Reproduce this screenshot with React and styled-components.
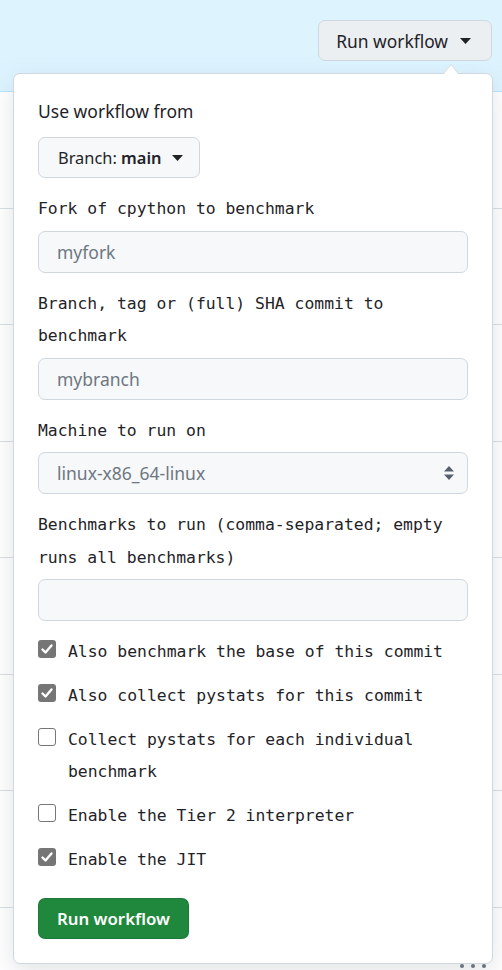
import React from 'react'
import styled, { createGlobalStyle } from 'styled-components'

const GlobalStyle = createGlobalStyle`
  html, body { margin: 0; padding: 0; background: #fff; }
  body { font-family: "Noto Sans", "Open Sans", sans-serif; color: #1f2328; overflow: hidden; }
  * { box-sizing: border-box; }
`

const Page = styled.div`
  position: relative;
  width: 502px;
  height: 970px;
  overflow: hidden;
`

const Header = styled.div`
  height: 92px;
  background: #ddf4ff;
  border-bottom: 1px solid #b6e3ff;
  display: flex;
  justify-content: flex-end;
  align-items: flex-start;
  padding: 20px 10px 0 0;
`

const TopButton = styled.button`
  display: flex;
  align-items: center;
  gap: 12px;
  height: 41px;
  padding: 0 20px 0 17px;
  border: 1px solid #d0d7de;
  border-radius: 7px;
  background: #ebeff2;
  color: #1f2328;
  font-family: inherit;
  font-size: 17.4px;
`

const Row = styled.div`
  height: 116.5px;
  border-bottom: ${p => (p.$last ? 'none' : '1px solid #d8dee4')};
  display: flex;
  justify-content: flex-end;
  align-items: flex-start;
  padding: ${p => (p.$last ? '56px 16px 0 0' : '0')};
`

const Kebab = styled.div`
  display: flex;
  gap: 7px;
  span { width: 4px; height: 4px; border-radius: 50%; background: #656d76; }
`

const Panel = styled.div`
  position: absolute;
  top: 73px;
  left: 13px;
  width: 480px;
  background: #fff;
  border: 1px solid #d0d7de;
  border-radius: 7px;
  box-shadow: 0 8px 24px rgba(140, 149, 159, 0.25);
  padding: 24px 24px 24px 24px;
  display: flex;
  flex-direction: column;
  &::before, &::after {
    content: '';
    position: absolute;
    right: 33px;
    border: 8px solid transparent;
    border-top: none;
  }
  &::before { top: -10px; border-bottom: 10px solid #d0d7de; }
  &::after { top: -9px; border-bottom: 10px solid #fff; }
`

const PlainLabel = styled.div`
  font-size: 17.5px;
  line-height: 26px;
  margin-bottom: 13px;
`

const BranchButton = styled.button`
  align-self: flex-start;
  display: flex;
  align-items: center;
  gap: 10px;
  height: 41px;
  padding: 0 16px 0 19px;
  border: 1px solid #d0d7de;
  border-radius: 7px;
  background: #f6f8fa;
  color: #1f2328;
  font-family: inherit;
  font-size: 16.4px;
  b { font-weight: 600; }
`

const Field = styled.div`
  display: flex;
  flex-direction: column;
  margin-top: 15px;
`

const MonoLabel = styled.div`
  font-family: "DejaVu Sans Mono", "Liberation Mono", monospace;
  font-size: 16.4px;
  line-height: 32.5px;
  margin-bottom: 5px;
`

const Input = styled.div`
  height: 42px;
  border: 1px solid #d0d7de;
  border-radius: 7px;
  background: #f6f8fa;
  display: flex;
  align-items: center;
  justify-content: space-between;
  padding: 0 12px 0 18px;
  color: #6e7781;
  font-size: 17.5px;
`

const Checks = styled.div`
  display: flex;
  flex-direction: column;
  gap: 12px;
  margin-top: 15px;
`

const CheckRow = styled.div`
  display: flex;
  align-items: flex-start;
  gap: 12px;
  font-family: "DejaVu Sans Mono", "Liberation Mono", monospace;
  font-size: 16.4px;
  line-height: 32px;
`

const Box = styled.span`
  flex: none;
  width: 18px;
  height: 18px;
  margin-top: 4px;
  border-radius: 3px;
  display: flex;
  align-items: center;
  justify-content: center;
  background: ${p => (p.$checked ? '#767676' : '#fff')};
  border: ${p => (p.$checked ? 'none' : '1.5px solid #767676')};
`

const GreenButton = styled.button`
  align-self: flex-start;
  margin-top: 22px;
  height: 41px;
  padding: 0 18px;
  border: 1px solid rgba(31, 35, 40, 0.15);
  border-radius: 7px;
  background: #1f883d;
  color: #fff;
  font-family: inherit;
  font-size: 16.8px;
  font-weight: 600;
`

const Caret = () => (
  <svg width="11" height="6" viewBox="0 0 11 6"><path d="M0 0h11L5.5 6z" fill="currentColor" /></svg>
)

const UpDown = () => (
  <svg width="12" height="16" viewBox="0 0 12 16">
    <path d="M6 1l5 5.5H1z M6 15l5-5.5H1z" fill="#57606a" />
  </svg>
)

const Check = () => (
  <svg width="14" height="14" viewBox="0 0 14 14">
    <path d="M2.5 7.5l3 3 6-7" stroke="#fff" strokeWidth="2.4" fill="none" strokeLinecap="round" strokeLinejoin="round" />
  </svg>
)

const options = [
  { text: 'Also benchmark the base of this commit', checked: true },
  { text: 'Also collect pystats for this commit', checked: true },
  { text: 'Collect pystats for each individual benchmark', checked: false },
  { text: 'Enable the Tier 2 interpreter', checked: false },
  { text: 'Enable the JIT', checked: true },
]

export default function App() {
  return (
    <Page>
      <GlobalStyle />
      <Header>
        <TopButton>Run workflow <Caret /></TopButton>
      </Header>
      {[0, 1, 2, 3, 4, 5, 6].map(i => <Row key={i} />)}
      <Row $last>
        <Kebab><span /><span /><span /></Kebab>
      </Row>
      <Panel>
        <PlainLabel>Use workflow from</PlainLabel>
        <BranchButton>
          <span>Branch: <b>main</b></span>
          <Caret />
        </BranchButton>
        <Field>
          <MonoLabel>Fork of cpython to benchmark</MonoLabel>
          <Input>myfork</Input>
        </Field>
        <Field>
          <MonoLabel>Branch, tag or (full) SHA commit to benchmark</MonoLabel>
          <Input>mybranch</Input>
        </Field>
        <Field>
          <MonoLabel>Machine to run on</MonoLabel>
          <Input>linux-x86_64-linux <UpDown /></Input>
        </Field>
        <Field>
          <MonoLabel>Benchmarks to run (comma-separated; empty runs all benchmarks)</MonoLabel>
          <Input />
        </Field>
        <Checks>
          {options.map(o => (
            <CheckRow key={o.text}>
              <Box $checked={o.checked}>{o.checked && <Check />}</Box>
              <span>{o.text}</span>
            </CheckRow>
          ))}
        </Checks>
        <GreenButton>Run workflow</GreenButton>
      </Panel>
    </Page>
  )
}
